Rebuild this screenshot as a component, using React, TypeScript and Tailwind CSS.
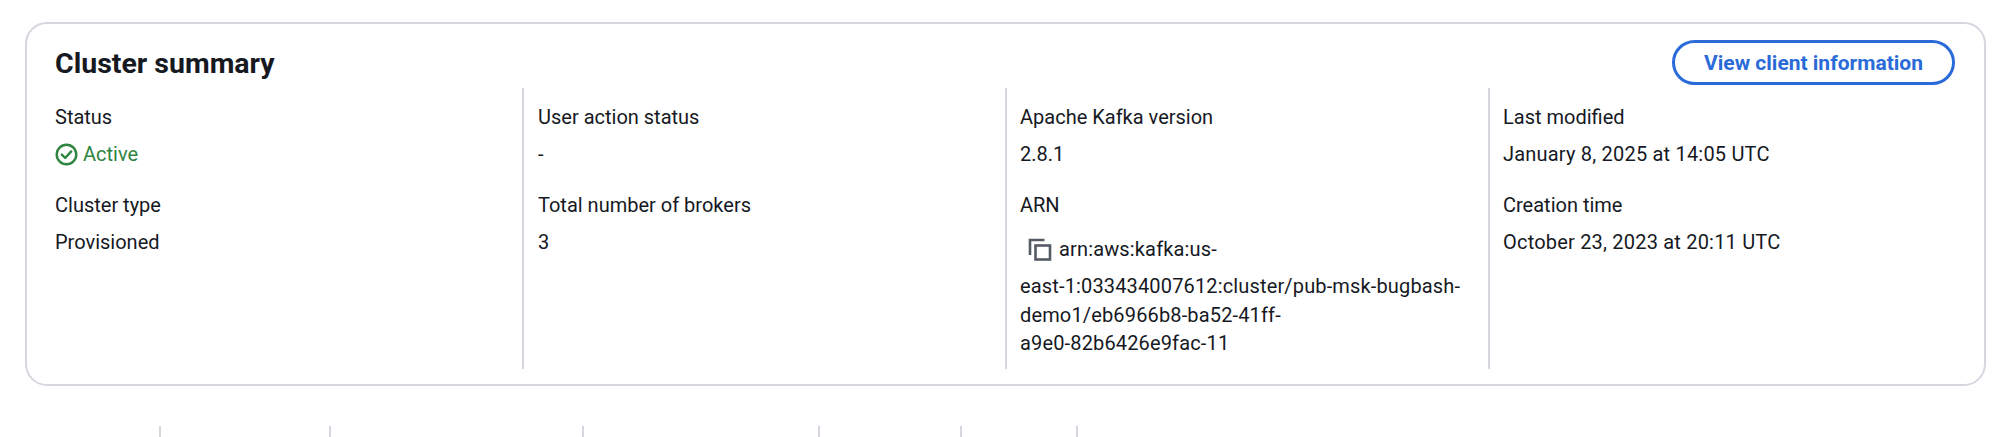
import React from 'react';

const CheckIcon = () => (
  <svg width="23" height="23" viewBox="0 0 23 23" fill="none" stroke="#2e8540" strokeWidth="2.4">
    <circle cx="11.5" cy="11.5" r="9.8" />
    <path d="M6.8 11.6l3.4 3.4 6-6.6" strokeLinecap="round" strokeLinejoin="round" />
  </svg>
);

const CopyIcon = () => (
  <svg width="24" height="23" viewBox="0 0 24 23" fill="none" stroke="#545b64" strokeWidth="2.6">
    <path d="M2 17V2h14.5" />
    <rect x="7.5" y="7.5" width="14.5" height="14" />
  </svg>
);

const Field: React.FC<{ label: string; children: React.ReactNode; className?: string }> = ({ label, children, className }) => (
  <div className={className}>
    <div className="h-[28px] leading-[28px]">{label}</div>
    <div className="mt-[9px] leading-[28px]">{children}</div>
  </div>
);

const headerCells = ['w-[161px]', 'w-[170px]', 'w-[253px]', 'w-[236px]', 'w-[142px]', 'w-[116px]'];

export default function App() {
  return (
    <div className="w-[1999px] h-[437px] overflow-hidden bg-white text-[#16191f] text-[20px] font-['Roboto',sans-serif]">
      <div className="pl-[25px] pt-[22px]">
        <div className="w-[1961px] h-[364px] border-2 border-[#d5d7de] rounded-[22px] pl-[28px] pr-[28px]">
          <div className="flex justify-between items-start h-[64px] pt-[16px]">
            <h2 className="text-[28.5px] font-bold leading-[48px]">Cluster summary</h2>
            <button className="w-[283px] h-[45px] pt-[2px] border-[3px] border-[#2a6bd9] rounded-full text-[#2a6bd9] text-[21px] font-bold mr-[1px]">
              View client information
            </button>
          </div>
          <div className="grid grid-cols-[467px_483px_483px_483px] h-[281px]">
            <div className="pt-[15px]">
              <Field label="Status">
                <span className="flex items-center gap-[5px] text-[#2e8540]">
                  <CheckIcon />
                  Active
                </span>
              </Field>
              <Field label="Cluster type" className="mt-[23px]">Provisioned</Field>
            </div>
            <div className="border-l-2 border-[#d5d7de] pl-[14px] pt-[15px]">
              <Field label="User action status">-</Field>
              <Field label="Total number of brokers" className="mt-[23px]">3</Field>
            </div>
            <div className="border-l-2 border-[#d5d7de] pl-[13px] pt-[15px]">
              <Field label="Apache Kafka version">2.8.1</Field>
              <div className="mt-[23px] h-[28px] leading-[28px]">ARN</div>
              <div className="mt-[16px] flex items-center gap-[7px] pl-[8px] h-[28px] leading-[28px] tracking-[0.15px]">
                <CopyIcon />
                <span>arn:aws:kafka:us-</span>
              </div>
              <div className="mt-[9px] leading-[28.5px] tracking-[0.15px]">
                east-1:033434007612:cluster/pub-msk-bugbash-
                <br />
                demo1/eb6966b8-ba52-41ff-
                <br />
                a9e0-82b6426e9fac-11
              </div>
            </div>
            <div className="border-l-2 border-[#d5d7de] pl-[13px] pt-[15px]">
              <Field label="Last modified">
                <span className="tracking-[0.2px]">January 8, 2025 at 14:05 UTC</span>
              </Field>
              <Field label="Creation time" className="mt-[23px]">
                <span className="tracking-[0.2px]">October 23, 2023 at 20:11 UTC</span>
              </Field>
            </div>
          </div>
        </div>
      </div>
      <div className="flex mt-[40px] h-[11px]">
        {headerCells.map((w) => (
          <div key={w} className={`${w} border-r-2 border-[#d5d7de]`} />
        ))}
      </div>
    </div>
  );
}
